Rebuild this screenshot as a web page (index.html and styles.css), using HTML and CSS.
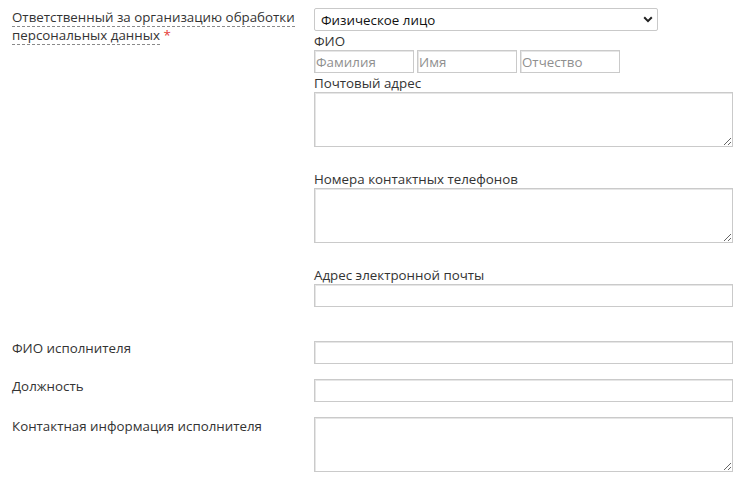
FILE: index.html
```html
<!DOCTYPE html>
<html lang="ru">
<head>
<meta charset="utf-8">
<title>Форма</title>
<link rel="stylesheet" href="styles.css">
</head>
<body>
<form class="form">
  <div class="row row-main">
    <div class="label"><span class="hint">Ответственный за организацию обработки персональных данных</span> <span class="req">*</span></div>
    <div class="field">
      <div class="select-wrap">
        <select class="select">
          <option>Физическое лицо</option>
        </select>
        <svg class="chev" width="10" height="7" viewBox="0 0 10 7"><polyline points="1.2,1.3 5,5.1 8.8,1.3" fill="none" stroke="#222" stroke-width="2"/></svg>
      </div>
      <div class="sub">ФИО</div>
      <div class="fio">
        <input class="input short" placeholder="Фамилия">
        <input class="input short" placeholder="Имя">
        <input class="input short" placeholder="Отчество">
      </div>
      <div class="sub">Почтовый адрес</div>
      <textarea class="area"></textarea>
      <div class="sub sub-gap">Номера контактных телефонов</div>
      <textarea class="area"></textarea>
      <div class="sub sub-gap">Адрес электронной почты</div>
      <input class="input wide">
    </div>
  </div>
  <div class="row">
    <div class="label lbl-up">ФИО исполнителя</div>
    <div class="field"><input class="input wide"></div>
  </div>
  <div class="row">
    <div class="label lbl-up">Должность</div>
    <div class="field"><input class="input wide"></div>
  </div>
  <div class="row">
    <div class="label">Контактная информация исполнителя</div>
    <div class="field"><textarea class="area"></textarea></div>
  </div>
</form>
</body>
</html>
```

FILE: styles.css
```css
* { box-sizing: border-box; }
html, body { margin: 0; background: #fff; }
body {
  font-family: "Open Sans", "Noto Sans", sans-serif;
  font-size: 13.33px;
  line-height: 18px;
  color: #333;
}
.form {
  display: flex;
  flex-direction: column;
  gap: 15px;
  padding: 8px 8px 0 12px;
}
.row {
  display: grid;
  grid-template-columns: 302px 419px;
}
.row-main { padding-bottom: 19px; }
.label { padding-right: 6px; }
.lbl-up { margin-top: -2px; }
.hint { border-bottom: 1px dashed #8a8a8a; }
.req { color: #e53935; }
.field { display: flex; flex-direction: column; align-items: flex-start; }
.select-wrap { position: relative; width: 344px; height: 23px; }
.select {
  appearance: none;
  -webkit-appearance: none;
  width: 100%;
  height: 23px;
  border: 1px solid #c9c9c9;
  border-radius: 2px;
  background: #fff;
  font-family: inherit;
  font-size: 13.33px;
  color: #111;
  padding: 0 0 0 6px;
  margin: 0;
}
.chev { position: absolute; right: 5px; top: 8px; pointer-events: none; }
.sub { line-height: 18px; margin-top: 1px; }
.sub-gap { margin-top: 23px; }
.fio { display: flex; gap: 3px; }
.input {
  height: 23px;
  border: 1px solid #cacaca;
  box-shadow: inset 1px 1px 0 #e6e6e6;
  background: #fff;
  font-family: inherit;
  font-size: 13.33px;
  color: #333;
  padding: 0 1px;
  margin: 0;
  outline: none;
}
.input::placeholder { color: #8f8f8f; }
.short { width: 100px; }
.wide { width: 419px; }
.area {
  display: block;
  width: 419px;
  height: 55px;
  border: 1px solid #cacaca;
  box-shadow: inset 1px 1px 0 #e6e6e6;
  font-family: inherit;
  font-size: 13.33px;
  margin: 0;
  padding: 2px;
}
```
